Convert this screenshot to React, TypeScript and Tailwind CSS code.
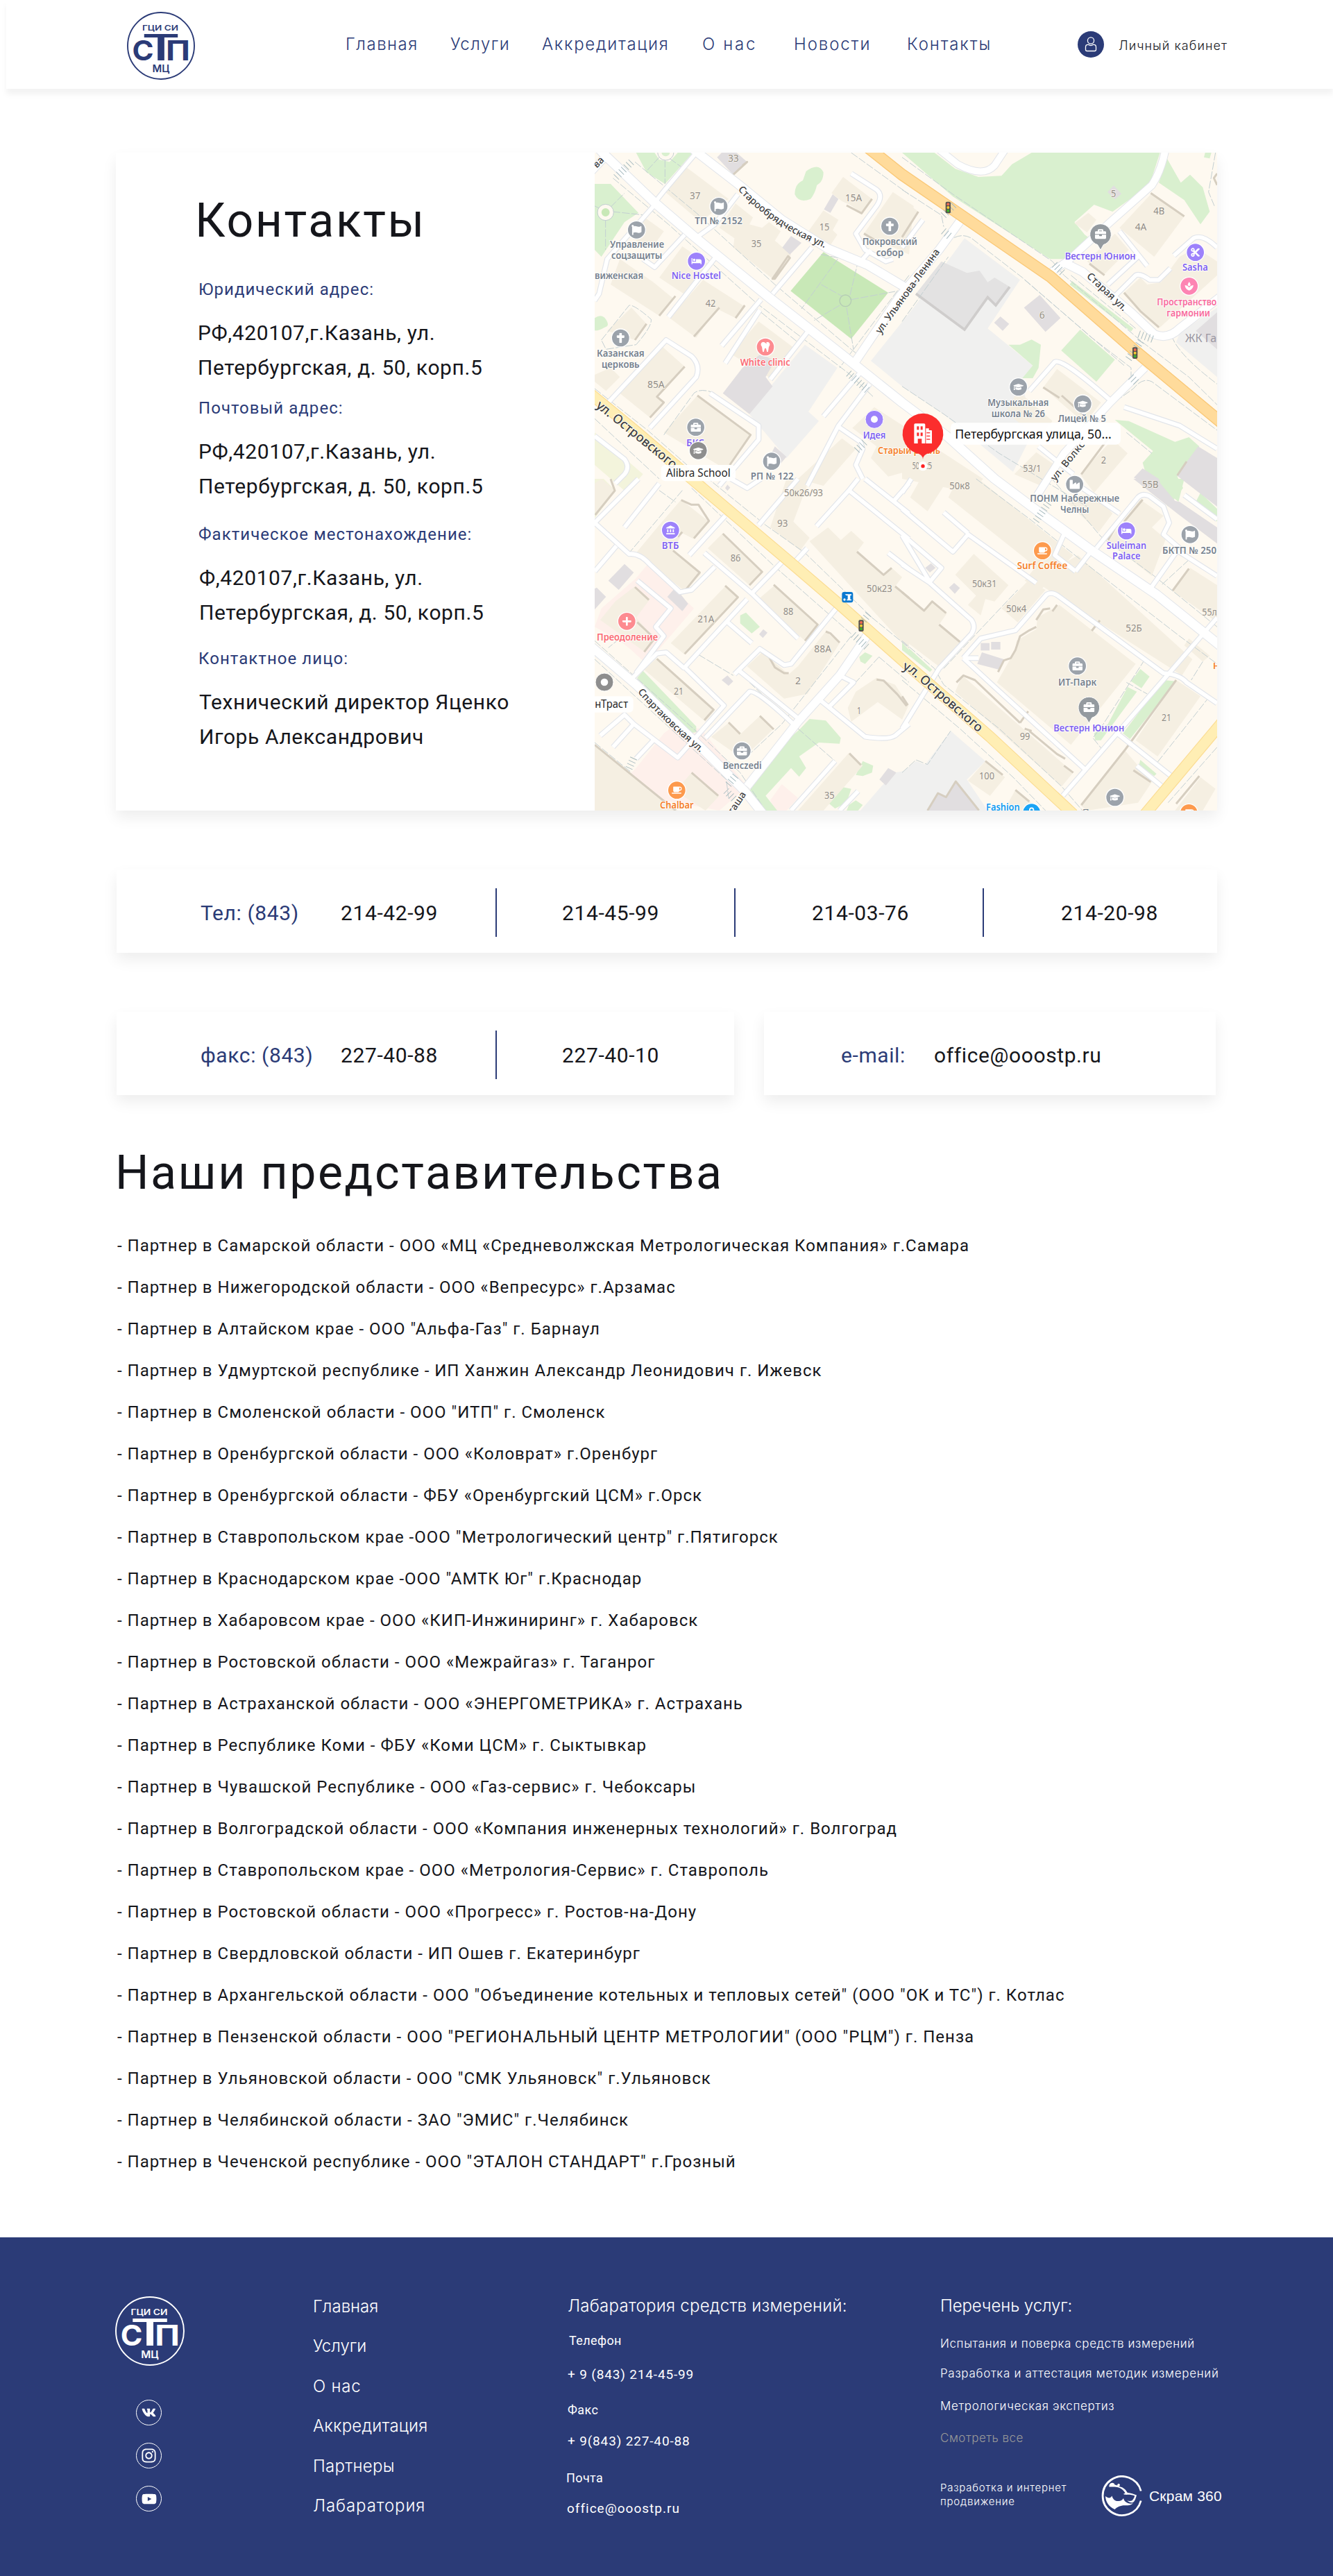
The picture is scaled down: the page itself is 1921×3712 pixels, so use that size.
import React from "react";
import {
  FaBed,
  FaBriefcase,
  FaCoffee,
  FaCross,
  FaCut,
  FaFlag,
  FaGraduationCap,
  FaIndustry,
  FaInstagram,
  FaPlus,
  FaShoppingBag,
  FaTooth,
  FaVk,
  FaYoutube,
} from "react-icons/fa";
import { MdAccountBalance, MdSpa } from "react-icons/md";

const INTER = "font-['Inter','Noto_Sans',sans-serif]";

/* ---------- brand ---------- */

function Logo({ size, color }: { size: number; color: string }) {
  return (
    <svg width={size} height={size} viewBox="0 0 98 98" className="shrink-0" fontFamily="Inter, sans-serif" fill={color}>
      <circle cx="49" cy="49" r="48" fill="none" stroke={color} strokeWidth="1.9" />
      <text x="22" y="26.8" fontSize="11" fontWeight="600" textLength="52" lengthAdjust="spacingAndGlyphs">ГЦИ СИ</text>
      <text x="7.5" y="70" fontSize="40" fontWeight="700" textLength="31" lengthAdjust="spacingAndGlyphs">С</text>
      <text x="21" y="70" fontSize="52" fontWeight="500" textLength="56" lengthAdjust="spacingAndGlyphs">Т</text>
      <text x="56" y="70" fontSize="40" fontWeight="700" textLength="35" lengthAdjust="spacingAndGlyphs">П</text>
      <text x="36.5" y="87" fontSize="14" fontWeight="600" textLength="25" lengthAdjust="spacingAndGlyphs">МЦ</text>
    </svg>
  );
}

function BearLogo() {
  return (
    <svg width="60" height="60" viewBox="0 0 60 60" className="shrink-0" fill="none">
      <path d="M58.2 22.5A28 28 0 1 0 58.2 36.5" stroke="#fff" strokeWidth="2.8" />
      <path d="M12.500 16.500c-.6-3 1.500-5.800 4.300-5.800 2.200 0 3.700 1.400 4 3.400 1.500-.7 2.600-.3 3.200.8.300-2.400 1.600-3.400 3.200-2.400 1.500 1 .6 2.600-.7 3.400 5.400.8 9.600 3.900 12.300 9 4.400.4 9.700 1.900 13.200 3.600-1.200 4.700-2.400 8.300-5.200 10.600-3.200.4-5.900-.6-8.600-2.500 3 .4 5.500.6 7.400-.4 1.600-1.900 2.900-4.200 3.700-6.800-3.500-1.500-8.500-2-12.600-1.500-2.400-6.400-7.300-9.900-12.700-10.900-4-.7-8-.4-11.500-.5z" fill="#fff" />
      <path d="M7 30c4 3 7 3.500 9.500-.5 1.200 5.200 4.500 7.800 9.500 7.600 3.200-.1 5.300-1.600 7-4.100.6 3.200 3 5.700 6.500 7 2.500.9 5 .8 7.500 0-3 3-7.500 3.500-12 3.300C29 43.200 24 45.500 20.500 49 12.500 45.500 7.500 39 7 30z" fill="#fff" />
      <path d="M33 27c1.500-1.600 4-2 6-.9-1.600 1.900-4.200 2.200-6 .9z" fill="#fff" />
    </svg>
  );
}

/* ---------- map ---------- */

type Tile = {
  dx: number;
  dy: number;
  pale?: string[];
  green?: string[];
  gray?: string[];
  pink?: string[];
  block?: string[];
  house?: string[];
  shade?: string[];
  lane?: string[];
  walk?: string[];
};

const tiles: Tile[] = [
  {
    dx: 0,
    dy: 0,
    pale: ["21,1240 230,1420 160,1500 21,1380"],
    green: [
      "200,30 280,30 300,60 345,70 380,30 445,30 410,70 325,165 245,115",
      "21,165 90,165 210,290 150,330 50,480 21,450",
    ],
    gray: ["930,860 1070,960 945,1150 990,1190 850,1350 690,1160 790,1030"],
    block: ["550,50 600,0 680,70 620,125", "660,960 740,900 800,930 760,1000 790,1040 690,1160 575,1070", "870,390 915,420 865,470 832,440", "1050,210 1075,230 1040,290 1012,275", "800,1300 850,1345 820,1380 780,1340"],
    house: [
      "400,80 600,230 480,330 320,195",
      "630,250 705,310 690,340 745,355 775,330 825,370 800,410 870,470 790,575 620,440 625,400 560,355",
      "1095,135 1220,230 1175,292 1125,255 1090,240 1045,205",
      "1010,280 1075,320 1050,365 1070,385 1040,430 945,370",
      "1310,200 1400,260 1380,470 1185,380",
      "230,305 320,370 270,440 180,400",
      "400,435 510,510 405,640 300,570",
      "130,490 275,590 360,660 300,735 90,600",
      "490,580 670,695 630,745 550,705 460,830 345,745",
      "180,700 245,770 195,840 75,800",
      "730,760 890,880 790,1010 610,900",
      "315,870 410,955 290,1080 320,1110 260,1175 130,1070",
      "465,1080 695,1250 590,1400 320,1240",
      "90,960 130,1000 70,1060 21,1020 21,990",
      "1230,1130 1400,1240 1400,1400 1290,1430 1215,1350 1240,1300 1135,1220",
      "1090,1265 1150,1310 1010,1470 900,1440",
    ],
    shade: ["M790,575l10,0 65,-90-8-8z", "M300,735l70-85M450,825l110-125M630,745l40-55M195,840l50-70", "M410,955l-120,130 30,25-60,65", "M465,1080l230,170-90,130", "M1110,258l65,34 45-62", "M660,85l20-15-60,55", "M1185,380l60,35"],
    lane: [
      "M285,240L325,190 460,30",
      "M470,390L540,340 640,210",
      "M285,250L75,490 40,640 20,670",
      "M410,385L280,525 230,490",
      "M545,480L340,740",
      "M960,440L790,640",
      "M740,665L570,865",
      "M735,710L585,940",
      "M80,1110L330,840 440,910Q480,950 460,1000L260,1220",
      "M520,1070L730,1210 730,1270 560,1470",
      "M945,800L780,1010",
      "M1130,120L1240,190Q1270,215 1240,260L1150,380 1190,450 1280,500 1310,490",
      "M1180,490L1215,450",
      "M1010,1170L1170,980",
      "M1210,1030L1075,1210 940,1470",
      "M1075,1215L1170,1280 1180,1310 1150,1380 1180,1440",
      "M21,1255L150,1355Q175,1390 150,1420L110,1460",
    ],
    walk: [
      "M100,140L340,340 720,680 1120,985 1225,1085",
      "M195,70L460,290 800,600 1130,880 1180,920",
      "M740,720L900,850",
      "M1130,30L1380,210",
      "M1000,470L1075,485 915,705M1000,600L1090,650M1125,645L1155,520M1130,665L1320,630M1110,700L1140,880M1080,690L970,755",
      "M21,1050L250,1230 420,1380",
      "M21,1180L300,1440",
      "M325,60V165M300,50L245,110M345,55L400,95",
      "M68,320V450M98,285L240,300M90,265L150,205M40,270L20,260",
      "M320,1250L450,1070Q480,1045 540,1070",
      "M1380,560L1080,960",
      "M50,840L170,690Q190,685 265,750 270,780 200,860L70,880z",
    ],
  },
  {
    dx: 1350,
    dy: 0,
    green: [
      "0,30 140,30 230,100 330,135 430,130 475,80 560,30 1115,30 1070,170 910,285 830,255 745,330 790,385 810,400 700,490 640,490 220,220",
      "1145,55 1205,160 1245,125 1300,180 1330,285 1290,340 1220,235 1110,160",
      "735,585 1000,790 990,803 725,600",
      "770,795 920,925 840,1020 688,885",
      "460,860 510,860 560,838 600,860 590,960 565,1005 520,1005 565,950",
      "920,1185 980,1190 1180,1280 1240,1260 1285,1300 1190,1430 1215,1480 1150,1560 1060,1440 1040,1370 1085,1320",
      "1310,30 1337,30 1330,55 1305,50",
    ],
    gray: [
      "270,400 510,580 370,790 565,950 520,1010 560,1250 480,1410 180,1160 0,1040 -135,930 50,700",
      "1200,810 1362,700 1362,1000 1185,850",
    ],
    block: [
      "595,645 685,745 620,805 527,700",
      "425,738 463,770 435,800 398,765",
      "915,172 948,208 920,232 888,200",
      "1280,1300 1362,1350 1362,1560 1187,1425",
      "1040,1395 1110,1440 1130,1500 1002,1435",
      "1362,720 1362,880 1270,800",
    ],
    house: [
      "0,230 70,285 0,400",
      "805,290 840,320 800,375 745,335",
      "1080,205 1220,305 1090,480 940,355",
      "920,380 980,450 870,560 800,500",
      "1200,480 1270,440 1362,500 1362,560 1110,790 955,640 1030,570 1060,600 1120,590 1170,520",
      "670,965 860,1110 790,1200 610,1045",
      "500,1060 650,1190 590,1270 450,1150",
      "580,1325 660,1380 600,1470 485,1420",
      "910,1270 975,1330 830,1500 770,1420",
      "0,1290 120,1290 350,1440 300,1500 0,1440",
    ],
    shade: ["M70,285L0,395", "M810,510l65,50M960,635l70,80 80,70", "M1075,205l145,100M1362,120l-14,20 14,30", "M610,1045l70,45M690,1080l90,80", "M775,1420l120-160", "M1190,1425l40-60"],
    lane: [
      "M90,320L0,440",
      "M1175,475L1260,400Q1300,380 1362,440",
      "M920,650L1010,560Q1030,550 1070,580L1110,580 1160,530",
      "M890,600L1020,480",
      "M550,1060L660,935Q690,915 900,1100",
      "M960,1130L1200,1210 1362,1310",
      "M590,1300L740,1420",
      "M940,370L1060,520",
    ],
    walk: [
      "M0,50L220,210 650,500 700,560 1040,850 1240,1000 1362,1120",
      "M0,190L170,300 180,350M190,420Q250,370 300,400L520,570 820,830 990,960 990,1010",
      "M730,560L1010,790",
      "M0,1040L180,1160 420,1330 800,1560",
      "M0,760L200,480",
      "M790,1200L1000,1050Q1040,1000 1080,1020L1362,1230",
      "M1355,30L1325,200 1350,260",
      "M1165,820Q1190,900 1362,1030",
      "M970,1240L1080,1330",
      "M530,580L740,760 960,950",
    ],
  },
  {
    dx: 0,
    dy: 1440,
    pale: ["21,0 60,0 110,50 21,170"],
    green: [
      "230,830 460,1070 460,1095 430,1100 205,860",
      "650,590 675,578 735,640 700,668 650,625",
      "910,1080 950,1038 1020,1045 1085,1120 1080,1145 990,1140 905,1200 935,1250 905,1288 870,1250 760,1370 810,1434 740,1434 690,1350 800,1180",
      "1165,770 1190,750 1222,765 1190,800 1170,790",
      "1150,1280 1180,1220 1225,1240 1220,1270 1180,1285",
      "1080,1330 1130,1340 1110,1400 1060,1425 1030,1400",
      "1120,1410 1150,1390 1180,1410 1160,1434 1110,1434",
      "1350,710 1380,730 1380,750 1355,730",
    ],
    gray: ["1320,1270 1380,1260 1380,1434 1170,1434 1260,1330"],
    pink: [
      "250,370 450,560 245,800 180,740 130,700 21,640 50,560 200,430",
      "360,1070 480,1080 680,1330 560,1434 100,1350 200,1250 320,1100",
      "830,1320 900,1380 850,1434 800,1434 780,1390",
    ],
    block: ["150,368 190,405 125,480 80,440", "30,470 70,510 21,565 21,475", "370,470 425,540 400,572 335,510", "595,850 620,875 600,895 570,870", "750,650 768,665 748,688 732,672", "595,25 607,38 595,52 585,40", "1290,1250 1325,1270 1280,1325 1252,1300"],
    house: [
      "21,20 50,0 110,50 30,150 21,140",
      "395,90 515,185 450,260 400,235 360,310 480,410 410,485 200,320 300,200",
      "575,235 745,405 690,460 510,300",
      "590,460 645,510 410,760 350,710",
      "800,460 985,630 930,700 730,520",
      "195,465 260,520 200,600 280,690 240,750 45,610 110,530",
      "290,775 540,1000 500,1050 235,825",
      "745,750 860,845 900,810 1020,660 1080,710 940,930 840,950 680,810",
      "600,1055 650,1105 735,1025 795,1080 660,1210 525,1115",
      "850,0 950,0 880,185 950,255 910,310 780,210",
      "950,270 1030,210 1085,265 1130,225 1185,275 1155,315 1270,415 1305,385 1350,425 1320,465 1380,520 1380,740",
      "1240,860 1320,890 1378,980 1350,1040 1245,965 1130,1050 1115,990 1150,920",
      "21,1150 380,1434 21,1434",
      "440,1270 560,1370 500,1434 370,1350",
      "1120,1185 1180,1240 1010,1434 900,1434",
    ],
    shade: [
      "M395,92l45,20 30,0 45,70-65,75M360,310l115,95-65,80M400,230l-20,20",
      "M575,237l170,165-55,58M585,462l55,50-230,245M795,458l190,172-55,70",
      "M290,778l245,220-40,45M745,750l30,20 25,45 40,25 20,0",
      "M600,1053l50,50M735,1025l60,58M21,1150l350,284M440,1270l115,100M1122,1187l50,50",
      "M90,1l18,50-85,105M1240,868l30,4 60,60 40,50M1020,660l20,8 40,40",
      "M195,468l60,55M205,620l75,70-45,58M1155,315l115,100 35-30M1320,465l60,50",
    ],
    lane: [
      "M21,190L210,0",
      "M150,210L300,20",
      "M21,190L170,325Q215,320 260,370L390,490 440,480 540,380",
      "M115,290L21,400",
      "M495,320L700,495",
      "M585,160L430,330",
      "M840,350L700,495 900,690",
      "M680,520L410,815",
      "M410,815L580,980 420,1160 380,1205 190,1060 150,1020 45,1110",
      "M185,860L290,755 330,750 410,820",
      "M205,440L350,560 285,640 320,680 200,840",
      "M590,615L700,710",
      "M625,845L735,735 840,805 870,800 1065,560",
      "M640,825L900,1035",
      "M500,1120L690,920Q720,910 880,1060",
      "M275,1130L200,1210M190,1060L100,1160",
      "M940,300L885,360",
      "M730,200L900,0",
      "M1000,960L1190,1115Q1290,1130 1320,1110L1380,1060",
      "M1035,985L1140,880 1080,850",
      "M980,205L1120,50 1380,260M1120,50L1160,0",
      "M1190,0L1380,150M1310,100L1380,20",
      "M610,0L680,40 740,0",
      "M1060,1220L870,1434M1160,1350L1080,1434",
      "M1290,320L1380,390",
    ],
    walk: [
      "M300,50L370,100M400,50L170,320",
      "M440,40L800,380 1130,670",
      "M500,-10L760,200 930,320 1220,600 1380,730",
      "M21,700L470,1100 650,1270 760,1434",
      "M21,780L590,1300 600,1380",
      "M130,690L80,730M470,760L620,850",
      "M1130,680L830,1060 680,1200",
      "M900,1080L1060,1220",
      "M1250,770L1140,890M1250,770L1380,880",
      "M690,880L850,1030",
      "M21,1140L180,1270",
    ],
  },
  {
    dx: 1350,
    dy: 1440,
    green: [
      "1095,0 1220,0 1195,100 1150,60",
      "1290,60 1362,130 1362,185 1270,100",
      "0,705 130,825 120,835 0,740",
      "1030,822 1070,855 1035,905 990,875",
      "975,900 1015,920 860,1130 835,1130 830,1100 890,1060",
      "1130,870 1185,875 985,1125 955,1100",
      "1030,1215 1100,1275 1090,1285 1025,1235",
    ],
    gray: ["210,1090 360,1220 280,1300 370,1434 0,1434 0,1270 60,1220 100,1235"],
    block: [
      "1000,0 1100,0 1180,95 1200,100 1362,210 1362,280 1190,150",
      "1225,0 1362,0 1362,110",
      "125,365 145,385 120,405 100,385",
      "225,450 250,472 228,497 203,470",
      "345,750 440,780 420,825 325,800",
      "340,710 378,710 378,742 340,742",
      "385,705 425,705 425,738 385,738",
      "110,1434 155,1355 190,1375 230,1305 335,1434",
    ],
    house: [
      "80,0 200,0 110,140 35,80",
      "240,0 330,0 740,330 600,480 530,440 570,390 540,350 200,80",
      "310,325 460,460 400,530 360,520 340,590 285,545 320,505 230,415",
      "545,440 620,480 500,620 430,560",
      "650,395 760,330 1255,780 1210,850 600,460",
      "680,545 1010,800 730,1150 410,880 490,740 495,700 580,650 585,600",
      "700,90 830,60 910,150 850,230",
      "1030,90 1130,160 1080,210 1140,260 1080,420 890,270",
      "1245,385 1362,460 1362,620 1170,485",
      "1240,690 1330,765 1300,790 1220,720",
      "0,490 95,570 130,530 195,580 160,630 255,705 165,815 0,690",
      "260,850 740,1270 690,1330 230,920",
      "1185,870 1290,940 1105,1200 1010,1130",
      "960,1170 1080,1310 1020,1400 800,1434 770,1410",
      "360,1220 445,1290 380,1370 285,1305",
      "490,1345 560,1400 530,1434 440,1434",
      "0,935 25,980 0,1010",
      "1290,1290 1355,1340 1300,1434 1180,1434",
    ],
    shade: [
      "M1040,90l-80,95M920,215l-30,50M1240,388l-70,95",
      "M640,560l-30,5-30,45M580,640l-30,15-40,25-20,60-20,35-30,10-25,50",
      "M670,545l-20,28M855,612l-35,45M545,1005l-35,50M550,1090l120,100 35,20",
      "M235,880l30-30 50,20 195,185M530,1080l30,10M700,1240l40,30",
      "M1185,870l-220,300-190,240M1000,1260l75,50M0,490l95,80 35-40 60,50M160,630l90,75",
      "M110,1434l45-75 35,17 42-68 100,125M490,1345l60,50M0,940l25,38",
      "M1285,1285l-100,120M360,1220l75,60",
    ],
    lane: [
      "M0,130L220,315 285,240 580,450",
      "M0,245L120,445 M0,370L120,450 300,610Q320,640 300,670L160,820 0,1080",
      "M0,60L40,0",
      "M180,145L285,235",
      "M120,445L170,385 0,240",
      "M265,775L340,690 490,655 625,500Q650,485 680,510L1130,840Q1200,845 1230,880L1362,970",
      "M265,775L400,900 790,1255",
      "M265,775H330",
      "M695,1370L930,1100 1170,1290",
      "M930,1100L1362,600",
      "M840,300L1020,80Q1040,60 1070,75L1130,120 1155,190 1130,240 1200,300",
      "M780,40L940,150",
      "M750,400L820,310M750,400L660,330 700,240",
      "M1070,480L1190,310 1362,420",
      "M1220,70L1362,175",
      "M1015,1240L1130,1335",
    ],
    walk: [
      "M320,0L560,180 760,340 1200,680 1362,800",
      "M640,-10L860,250 1090,420 1362,640",
      "M0,700L140,820 180,890 420,1080 690,1330 780,1434",
      "M0,870L250,1080 480,1290 620,1434",
      "M180,820L330,660 500,480",
      "M1050,780L870,1060 825,1120 865,1170M970,880L1060,930",
      "M1330,940L1100,1230",
      "M1240,350L1120,460M1362,1160L1150,1400",
      "M1300,790L1250,870",
      "M0,1270L60,1215 110,1235 210,1090",
    ],
  },
];

const MAIN_ROADS: [string, number][] = [
  ["M0,-30L70,45 285,250 460,400 780,660 960,800 1150,950 1350,1110 1550,1260 1750,1440 1950,1590 2170,1750 2450,1940 2730,2165", 38],
  ["M440,10L640,165 830,320 1030,445 1200,515 1360,610", 36],
  ["M1605,320L1510,450 1340,650 1150,930", 34],
  ["M0,2160L200,2330 500,2620 670,2790 750,2890", 36],
  ["M1200,2115L1080,2290 900,2490 680,2770", 34],
  ["M2400,960L2250,1110 2050,1330 1935,1510", 30],
  ["M2050,505L2130,545 2340,720 2440,815Q2500,840 2550,790L2730,650", 34],
  ["M2490,10Q2470,110 2430,170L2250,330 2070,495 1975,560", 30],
  ["M1490,0L1590,80Q1700,140 1750,85L1800,10", 28],
  ["M65,50L-10,130", 30],
];

const OSTROVSKY = "M0,1070L200,1235 440,1440 860,1795 1070,1975 1380,2250 1730,2555 2090,2890";
const PETERSBURG = "M1180,-10L1350,125 1590,290 1990,565 2350,880 2740,1205";

const NUMBERS: [number, number, string, number][] = [
  [598, 68, "33", 46], [432, 231, "37", 46], [698, 437, "35", 44], [1104, 240, "15А", 72], [992, 367, "15", 44],
  [500, 695, "42", 44], [249, 1046, "85А", 74], [2253, 221, "5", 22], [2437, 297, "4В", 48], [2357, 367, "4А", 50],
  [1943, 748, "6", 24], [1873, 1410, "53/1", 78], [2210, 1373, "2", 22], [1555, 1486, "50к8", 88], [2388, 1480, "55В", 70],
  [840, 1514, "50к26/93", 168], [810, 1646, "93", 46], [608, 1796, "86", 44], [836, 2028, "88", 44], [466, 2061, "21А", 72],
  [970, 2190, "88А", 74], [888, 2327, "2", 24], [363, 2372, "21", 42], [1155, 2457, "1", 18], [1197, 1928, "50к23", 110],
  [1014, 2822, "35", 44], [1653, 1908, "50к31", 106], [1800, 2015, "50к4", 88], [2317, 2099, "52Б", 70], [2647, 2032, "55л", 64],
  [2472, 2487, "21", 42], [1859, 2569, "99", 44], [1683, 2739, "100", 66],
  [1394, 1398, "50", 30], [1444, 1398, "к5", 36],
];

type Poi = { x: number; y: number; w: number; text: string; color: string };
const GREY = "#76818d";
const VIOLET = "#7f62f0";
const POI_TEXT: Poi[] = [
  { x: 557, y: 339, w: 206, text: "ТП № 2152", color: GREY },
  { x: 204, y: 442, w: 234, text: "Управление", color: GREY },
  { x: 203, y: 489, w: 220, text: "соцзащиты", color: GREY },
  { x: 126, y: 577, w: 210, text: "виженская", color: GREY },
  { x: 460, y: 575, w: 214, text: "Nice Hostel", color: VIOLET },
  { x: 133, y: 913, w: 206, text: "Казанская", color: GREY },
  { x: 133, y: 961, w: 164, text: "церковь", color: GREY },
  { x: 758, y: 951, w: 216, text: "White clinic", color: "#fb6a72" },
  { x: 1297, y: 430, w: 238, text: "Покровский", color: GREY },
  { x: 1297, y: 477, w: 118, text: "собор", color: GREY },
  { x: 1230, y: 1266, w: 98, text: "Идея", color: VIOLET },
  { x: 1380, y: 1331, w: 270, text: "Старый рояль", color: "#f5812b" },
  { x: 456, y: 1298, w: 78, text: "БКС", color: VIOLET },
  { x: 788, y: 1443, w: 186, text: "РП № 122", color: GREY },
  { x: 2207, y: 491, w: 306, text: "Вестерн Юнион", color: VIOLET },
  { x: 2617, y: 541, w: 110, text: "Sasha", color: VIOLET },
  { x: 2581, y: 690, w: 258, text: "Пространство", color: "#f86a9c" },
  { x: 2588, y: 737, w: 188, text: "гармонии", color: "#f86a9c" },
  { x: 1852, y: 1125, w: 264, text: "Музыкальная", color: GREY },
  { x: 1852, y: 1172, w: 232, text: "школа № 26", color: GREY },
  { x: 2128, y: 1195, w: 208, text: "Лицей № 5", color: GREY },
  { x: 2096, y: 1539, w: 386, text: "ПОНМ Набережные", color: GREY },
  { x: 2096, y: 1586, w: 124, text: "Челны", color: GREY },
  { x: 1956, y: 1829, w: 218, text: "Surf Coffee", color: "#f5812b" },
  { x: 2320, y: 1743, w: 172, text: "Suleiman", color: VIOLET },
  { x: 2320, y: 1789, w: 122, text: "Palace", color: VIOLET },
  { x: 2592, y: 1763, w: 234, text: "БКТП № 250", color: GREY },
  { x: 348, y: 1742, w: 74, text: "ВТБ", color: VIOLET },
  { x: 162, y: 2139, w: 264, text: "Преодоление", color: "#fb6a72" },
  { x: 2108, y: 2334, w: 166, text: "ИТ-Парк", color: GREY },
  { x: 2158, y: 2533, w: 306, text: "Вестерн Юнион", color: VIOLET },
  { x: 659, y: 2694, w: 168, text: "Benczedi", color: GREY },
  { x: 376, y: 2864, w: 146, text: "Chalbar", color: "#f5812b" },
  { x: 1786, y: 2873, w: 146, text: "Fashion", color: "#109cf1" },
];

type Marker = { x: number; y: number; fill: string; Icon: React.ElementType };
const MARKERS: Marker[] = [
  { x: 558, y: 262, fill: "#9ca3ab", Icon: FaFlag },
  { x: 202, y: 364, fill: "#9ca3ab", Icon: FaFlag },
  { x: 461, y: 499, fill: "#9d82fb", Icon: FaBed },
  { x: 133, y: 831, fill: "#9ca3ab", Icon: FaCross },
  { x: 759, y: 870, fill: "#fd8b90", Icon: FaTooth },
  { x: 1297, y: 348, fill: "#9ca3ab", Icon: FaCross },
  { x: 458, y: 1217, fill: "#9ca3ab", Icon: FaBriefcase },
  { x: 469, y: 1318, fill: "#8e8e8e", Icon: FaGraduationCap },
  { x: 786, y: 1364, fill: "#9ca3ab", Icon: FaFlag },
  { x: 2618, y: 461, fill: "#9d82fb", Icon: FaCut },
  { x: 2591, y: 607, fill: "#fd85b3", Icon: MdSpa },
  { x: 1853, y: 1043, fill: "#9ca3ab", Icon: FaGraduationCap },
  { x: 2131, y: 1116, fill: "#9ca3ab", Icon: FaGraduationCap },
  { x: 2096, y: 1464, fill: "#9ca3ab", Icon: FaIndustry },
  { x: 1957, y: 1751, fill: "#fd9a4d", Icon: FaCoffee },
  { x: 2320, y: 1665, fill: "#9d82fb", Icon: FaBed },
  { x: 2595, y: 1681, fill: "#9ca3ab", Icon: FaFlag },
  { x: 349, y: 1662, fill: "#9d82fb", Icon: MdAccountBalance },
  { x: 160, y: 2056, fill: "#fd8b90", Icon: FaPlus },
  { x: 2108, y: 2249, fill: "#9ca3ab", Icon: FaBriefcase },
  { x: 658, y: 2616, fill: "#9ca3ab", Icon: FaBriefcase },
  { x: 376, y: 2786, fill: "#fd9a4d", Icon: FaCoffee },
  { x: 2270, y: 2817, fill: "#9ca3ab", Icon: FaGraduationCap },
  { x: 1910, y: 2882, fill: "#1aa4f5", Icon: FaShoppingBag },
  { x: 2590, y: 2884, fill: "#fd9a4d", Icon: FaCoffee },
];

function Layer({ render }: { render: (t: Tile) => React.ReactNode }) {
  return (
    <>
      {tiles.map((t, i) => (
        <g key={i} transform={`translate(${t.dx} ${t.dy})`}>{render(t)}</g>
      ))}
    </>
  );
}

const polys = (list: string[] | undefined, fill: string) =>
  (list ?? []).map((p, i) => <polygon key={i} points={p} fill={fill} />);

const strokes = (list: string[] | undefined, stroke: string, width: number, dash?: string) =>
  (list ?? []).map((d, i) => (
    <path key={i} d={d} fill="none" stroke={stroke} strokeWidth={width} strokeDasharray={dash} strokeLinejoin="round" />
  ));

function TrafficLight({ x, y }: { x: number; y: number }) {
  return (
    <g transform={`translate(${x} ${y})`}>
      <rect x="-11" y="-25" width="22" height="50" rx="6" fill="#55524e" />
      <circle cy="-14" r="6" fill="#f26a50" />
      <circle r="6" fill="#f5cb32" />
      <circle cy="14" r="6" fill="#3faf2c" />
    </g>
  );
}

function Crosswalk({ x, y, a, n = 7 }: { x: number; y: number; a: number; n?: number }) {
  return (
    <g transform={`translate(${x} ${y}) rotate(${a})`} stroke="#a9bcc0" strokeWidth="3">
      {Array.from({ length: n }, (_, i) => (
        <path key={i} d={`M${i * 15},-16V16`} />
      ))}
    </g>
  );
}

function WorkPin({ x, y }: { x: number; y: number }) {
  return (
    <g transform={`translate(${x} ${y})`}>
      <path d="M0,68L-13,45A46,46 0 1 1 13,45z" fill="#949a9f" stroke="#fff" strokeWidth="3" />
      <FaBriefcase x={-24} y={-25} size={48} color="#fff" />
    </g>
  );
}

function CityMap() {
  return (
    <svg width="897" height="948" viewBox="21 30 2691 2844" className="block shrink-0" fontFamily="'Noto Sans', sans-serif">
      <rect x="0" y="0" width="2740" height="2900" fill="#fef9f0" />
      <Layer render={(t) => polys(t.pale, "#f3f4dc")} />
      <Layer render={(t) => polys(t.gray, "#f0f0ef")} />
      <Layer render={(t) => polys(t.pink, "#fef0eb")} />
      <Layer render={(t) => polys(t.green, "#d9f0cf")} />
      <polygon points="1010,460 1290,635 1130,835 868,628" fill="#c8e8b7" />
      <path d="M935,110q55-40 75,5 0,40-28,55-10,40-28,60-50,20-68-20 0-45 35-60z" fill="#d9f0cf" />
      <path d="M21,745q30-20 48,5 20,30-5,35-25,15-43,14z" fill="#d9f0cf" />
      <polygon points="1520,500 1630,550 1685,540 1720,590 1750,570 1815,610 1755,690 1720,655 1620,800 1410,640" fill="#e3e2e2" />
      <path d="M1410,640L1620,795 1720,655 1755,690 1815,610" fill="none" stroke="#cfcdcc" strokeWidth="11" />
      <Layer render={(t) => polys(t.house, "#f5efe2")} />
      <Layer render={(t) => polys(t.block, "#e1dee0")} />
      <Layer render={(t) => strokes(t.shade, "#d6cec0", 9)} />
      <Layer render={(t) => strokes(t.walk, "#c3cfd2", 3, "34 7")} />
      <Layer render={(t) => strokes(t.lane, "#e2e5ea", 24)} />
      {MAIN_ROADS.map(([d, w]) => (
        <path key={d} d={d} fill="none" stroke="#e2e5ea" strokeWidth={w + 6} strokeLinejoin="round" />
      ))}
      <Layer render={(t) => strokes(t.lane, "#fff", 17)} />
      {MAIN_ROADS.map(([d, w]) => (
        <path key={d} d={d} fill="none" stroke="#fff" strokeWidth={w} strokeLinejoin="round" />
      ))}
      <circle cx="68" cy="288" r="26" fill="#d9f0cf" stroke="#fef9f0" strokeWidth="16" />
      <circle cx="68" cy="288" r="35" fill="none" stroke="#c3cfd2" strokeWidth="3" />
      <circle cx="68" cy="288" r="17" fill="#c8e8b7" />
      <circle cx="328" cy="28" r="26" fill="#d9f0cf" stroke="#fef9f0" strokeWidth="16" />
      <circle cx="328" cy="28" r="35" fill="none" stroke="#c3cfd2" strokeWidth="3" />
      <circle cx="1105" cy="670" r="25" fill="none" stroke="#b5ccb5" strokeWidth="4" />
      {[OSTROVSKY, "M2740,2485L2400,2890"].map((d) => (
        <g key={d} fill="none">
          <path d={d} stroke="#fbdc92" strokeWidth="50" />
          <path d={d} stroke="#ffeeb4" strokeWidth="43" />
        </g>
      ))}
      <path d={PETERSBURG} fill="none" stroke="#fac877" strokeWidth="52" />
      <path d={PETERSBURG} fill="none" stroke="#ffdb9b" strokeWidth="44" />

      <Crosswalk x={115} y={135} a={-45} />
      <Crosswalk x={1120} y={985} a={42} n={8} />
      <Crosswalk x={1155} y={1315} a={-45} n={4} />
      <Crosswalk x={1530} y={300} a={-45} n={5} />
      <Crosswalk x={1530} y={370} a={40} n={3} />
      <Crosswalk x={2010} y={515} a={45} n={4} />
      <Crosswalk x={2375} y={815} a={20} n={5} />
      <Crosswalk x={2330} y={920} a={-55} n={7} />
      <Crosswalk x={2340} y={1000} a={45} n={3} />
      <Crosswalk x={1930} y={1620} a={-55} n={7} />
      <Crosswalk x={1140} y={2115} a={42} n={6} />
      <Crosswalk x={1185} y={2050} a={-50} n={3} />
      <Crosswalk x={170} y={2690} a={-65} n={4} />
      <Crosswalk x={600} y={2760} a={-50} n={4} />
      <Crosswalk x={590} y={2790} a={45} n={4} />
      <TrafficLight x={1549} y={267} />
      <TrafficLight x={2357} y={896} />
      <TrafficLight x={1173} y={2075} />
      <rect x="1090" y="1929" width="48" height="46" rx="9" fill="#0b79d0" />
      <path d="M1103,1939h28v5h-5v17h5v5h-20v-5h4v-17h-7z" fill="#fff" />
      <circle cx="1101" cy="1962" r="5" fill="#fff" />

      <g fontSize="41" fill="#908c86" stroke="#fbf6ec" strokeWidth="4" paintOrder="stroke">
        {NUMBERS.map(([x, y, s, w]) => (
          <text key={`${x}-${y}`} x={x} y={y} textLength={w} lengthAdjust="spacingAndGlyphs">{s}</text>
        ))}
      </g>
      <text x="2574" y="850" fontSize="48" fill="#9a97a2" textLength="136" lengthAdjust="spacingAndGlyphs">ЖК Га</text>

      <g fill="none">
        <path id="st-old" d="M640,190Q780,350 1040,452" />
        <path id="st-ostr1" d="M24,1128L330,1375 440,1470" />
        <path id="st-ostr2" d="M1350,2262L1380,2275 1700,2555 1760,2610" />
        <path id="st-spart" d="M206,2362Q330,2505 510,2650" />
      </g>
      <g fill="#424242" stroke="#fff" strokeWidth="5" paintOrder="stroke" fontWeight="500">
        <text fontSize="42"><textPath href="#st-old">Старообрядческая ул.</textPath></text>
        <text fontSize="55"><textPath href="#st-ostr1">ул. Островского</textPath></text>
        <text fontSize="55"><textPath href="#st-ostr2">ул. Островского</textPath></text>
        <text fontSize="42"><textPath href="#st-spart">Спартаковская ул.</textPath></text>
        <text fontSize="43" textLength="440" transform="translate(1256 815) rotate(-54)">ул. Ульянова-Ленина</text>
        <text fontSize="43" textLength="220" transform="translate(2146 567) rotate(43)">Старая ул.</text>
        <text fontSize="43" textLength="205" transform="translate(2012 1452) rotate(-51)">ул. Волкс</text>
        <text fontSize="42" transform="translate(618 2892) rotate(-56)">таша</text>
        <text fontSize="42" transform="translate(30 98) rotate(-45)">ва</text>
      </g>

      <g fontSize="41" fontWeight="600" textAnchor="middle" stroke="#fff" strokeWidth="5" paintOrder="stroke">
        {POI_TEXT.map((p) => (
          <text key={`${p.x}-${p.y}`} x={p.x} y={p.y} fill={p.color} textLength={p.w} lengthAdjust="spacingAndGlyphs">{p.text}</text>
        ))}
      </g>
      {MARKERS.map(({ x, y, fill, Icon }) => (
        <g key={`${x}-${y}`}>
          <circle cx={x} cy={y} r="39" fill={fill} stroke="#fff" strokeWidth="4" />
          <Icon x={x - 22} y={y - 22} size={44} color="#fff" />
        </g>
      ))}
      <circle cx="1230" cy="1183" r="39" fill="#9d82fb" stroke="#fff" strokeWidth="3" />
      <circle cx="1230" cy="1183" r="15" fill="#fff" />
      <circle cx="63" cy="2319" r="39" fill="#8e8e8e" stroke="#fff" strokeWidth="3" />
      <circle cx="63" cy="2319" r="16" fill="#fff" />
      <WorkPin x={2208} y={383} />
      <WorkPin x={2158} y={2428} />

      <rect x="308" y="1380" width="322" height="70" rx="18" fill="#fff" fillOpacity=".9" />
      <text x="330" y="1430" fontSize="46" fill="#262626" textLength="278" lengthAdjust="spacingAndGlyphs">Alibra School</text>
      <rect x="-20" y="2380" width="208" height="70" rx="18" fill="#fff" fillOpacity=".9" />
      <text x="22" y="2430" fontSize="46" fill="#262626" textLength="143" lengthAdjust="spacingAndGlyphs">нТраст</text>
      <text x="2130" y="2894" fontSize="39" fill={GREY}>Пространство</text>
      <text x="2694" y="2262" fontSize="39" fontWeight="600" fill="#f5812b">Н</text>

      <rect x="1560" y="1198" width="735" height="94" rx="20" fill="#fff" fillOpacity=".93" />
      <text x="1579" y="1265" fontSize="54" fill="#111" textLength="676" lengthAdjust="spacingAndGlyphs">Петербургская улица, 50...</text>
      <circle cx="1440" cy="1385" r="20" fill="#fff" />
      <circle cx="1440" cy="1385" r="8" fill="#f22" />
      <path d="M1440,1356Q1440,1334 1410,1328A88,88 0 1 1 1470,1328Q1440,1334 1440,1356z" fill="#fb2d2d" />
      <g transform="translate(1350 0)" fill="#fff">
        <path d="M52,1206q0-5 5-5h38q5 0 5 5v81h-15v-20h-17v20h-16z" />
        <path d="M103,1222h13v8h10q3 0 3 4v53h-26z" />
        <g fill="#fb2d2d">
          <rect x="64" y="1213" width="9" height="15" />
          <rect x="80" y="1213" width="9" height="15" />
          <rect x="64" y="1240" width="9" height="15" />
          <rect x="80" y="1240" width="9" height="15" />
          <rect x="106" y="1239" width="15" height="4" />
          <rect x="106" y="1253" width="15" height="4" />
          <rect x="106" y="1267" width="15" height="4" />
        </g>
      </g>
    </svg>
  );
}

/* ---------- page sections ---------- */

function Header() {
  return (
    <header className={`ml-[9px] flex h-32 items-start bg-white shadow-[0_8px_8px_rgba(0,0,0,0.05)] ${INTER}`}>
      <div className="ml-[174px] mt-[17px]">
        <Logo size={98} color="#2b3b77" />
      </div>
      <nav className="ml-[217px] mt-[48px] grid grid-cols-[151px_132px_231px_132px_163px_246px] whitespace-nowrap text-[24px] font-light leading-8 text-[#2b3b77]">
        <a className="tracking-[1.5px]">Главная</a>
        <a className="tracking-[1.5px]">Услуги</a>
        <a className="tracking-[1.7px]">Аккредитация</a>
        <a className="tracking-[2.7px]">О нас</a>
        <a className="tracking-[1.9px]">Новости</a>
        <a className="tracking-[1.9px]">Контакты</a>
      </nav>
      <a className="mt-[45px] flex items-start">
        <span className="flex size-[38px] items-center justify-center rounded-full bg-[#2b3b77]">
          <svg width="18" height="22" viewBox="0 0 18 22" fill="none" stroke="#fff" strokeWidth="1.300">
            <circle cx="9" cy="5.500" r="4.600" />
            <path d="M5.500 11.300H4.500Q1.500 11.300 1.500 15v3.500Q1.500 20.500 3.500 20.500h11q2 0 2-2V15q0-3.700-3-3.700h-1q-3.500 2.600-7 0z" />
          </svg>
        </span>
        <span className="ml-[21px] mt-[9px] whitespace-nowrap text-[18px] font-light leading-6 tracking-[1.06px] text-[#15161b]">Личный кабинет</span>
      </a>
    </header>
  );
}

const CARD = "bg-white shadow-[0_10px_20px_rgba(0,0,0,0.07)]";
const LABEL = "text-[24px] leading-8 tracking-[1.05px] text-[#2b3b77]";
const ADDRESS = "mt-[22px] text-[30px] leading-[50px] tracking-[0.6px] text-[#15161b]";

function ContactsCard() {
  return (
    <section className={`ml-[167px] mt-[92px] flex h-[948px] w-[1587px] ${CARD}`}>
      <div className="w-[690px] shrink-0 whitespace-nowrap pl-[114px] pt-[58px]">
        <h1 className="text-[68px] leading-[80px] tracking-[2.6px] text-[#15161b]">Контакты</h1>
        <div className="pl-[5px]">
          <h2 className={`mt-[43px] ${LABEL}`}>Юридический адрес:</h2>
          <p className={`-ml-px ${ADDRESS}`}>РФ,420107,г.Казань, ул.<br />Петербургская, д. 50, корп.5</p>
          <h2 className={`mt-[17px] ${LABEL}`}>Почтовый адрес:</h2>
          <p className={ADDRESS}>РФ,420107,г.Казань, ул.<br />Петербургская, д. 50, корп.5</p>
          <h2 className={`mt-[28px] ${LABEL}`}>Фактическое местонахождение:</h2>
          <p className={`ml-px ${ADDRESS}`}>Ф,420107,г.Казань, ул.<br />Петербургская, д. 50, корп.5</p>
          <h2 className={`mt-[25px] ${LABEL}`}>Контактное лицо:</h2>
          <p className={`ml-px ${ADDRESS}`}>Технический директор Яценко<br />Игорь Александрович</p>
        </div>
      </div>
      <CityMap />
    </section>
  );
}

const VALUE = "mt-[43px] shrink-0 whitespace-nowrap text-[30px] leading-10 tracking-[0.6px]";
const DIVIDER = "mt-[27px] h-[70px] w-[2px] shrink-0 bg-[#2b3b77]";

function Phones() {
  return (
    <>
      <section className={`ml-[168px] mt-[85px] flex h-[120px] w-[1586px] items-start pl-[121px] text-[#15161b] ${CARD}`}>
        <span className={`w-[202px] text-[#2b3b77] ${VALUE}`}>Тел: (843)</span>
        <span className={`w-[223px] ${VALUE}`}>214-42-99</span>
        <i className={DIVIDER} />
        <span className={`ml-[94px] w-[248px] ${VALUE}`}>214-45-99</span>
        <i className={DIVIDER} />
        <span className={`ml-[110px] w-[246px] ${VALUE}`}>214-03-76</span>
        <i className={DIVIDER} />
        <span className={`ml-[111px] ${VALUE}`}>214-20-98</span>
      </section>
      <div className="ml-[168px] mt-[85px] flex gap-[43px] text-[#15161b]">
        <section className={`flex h-[120px] w-[890px] items-start pl-[121px] ${CARD}`}>
          <span className={`w-[202px] text-[#2b3b77] ${VALUE}`}>факс: (843)</span>
          <span className={`w-[223px] ${VALUE}`}>227-40-88</span>
          <i className={DIVIDER} />
          <span className={`ml-[94px] ${VALUE}`}>227-40-10</span>
        </section>
        <section className={`flex h-[120px] w-[651px] items-start pl-[111px] ${CARD}`}>
          <span className={`w-[134px] text-[#2b3b77] ${VALUE}`}>e-mail:</span>
          <span className={VALUE}>office@ooostp.ru</span>
        </section>
      </div>
    </>
  );
}

const PARTNERS = [
  "- Партнер в Самарской области - ООО «МЦ «Средневолжская Метрологическая Компания» г.Самара",
  "- Партнер в Нижегородской области - ООО «Вепресурс» г.Арзамас",
  '- Партнер в Алтайском крае - ООО "Альфа-Газ" г. Барнаул',
  "- Партнер в Удмуртской республике - ИП Ханжин Александр Леонидович г. Ижевск",
  '- Партнер в Смоленской области - ООО "ИТП" г. Смоленск',
  "- Партнер в Оренбургской области - ООО «Коловрат» г.Оренбург",
  "- Партнер в Оренбургской области - ФБУ «Оренбургский ЦСМ» г.Орск",
  '- Партнер в Ставропольском крае -ООО "Метрологический центр" г.Пятигорск',
  '- Партнер в Краснодарском крае -ООО "АМТК Юг" г.Краснодар',
  "- Партнер в Хабаровсом крае - ООО «КИП-Инжиниринг» г. Хабаровск",
  "- Партнер в Ростовской области - ООО «Межрайгаз» г. Таганрог",
  "- Партнер в Астраханской области - ООО «ЭНЕРГОМЕТРИКА» г. Астрахань",
  "- Партнер в Республике Коми - ФБУ «Коми ЦСМ» г. Сыктывкар",
  "- Партнер в Чувашской Республике - ООО «Газ-сервис» г. Чебоксары",
  "- Партнер в Волгоградской области - ООО «Компания инженерных технологий» г. Волгоград",
  "- Партнер в Ставропольском крае - ООО «Метрология-Сервис» г. Ставрополь",
  "- Партнер в Ростовской области - ООО «Прогресс» г. Ростов-на-Дону",
  "- Партнер в Свердловской области - ИП Ошев г. Екатеринбург",
  '- Партнер в Архангельской области - ООО "Объединение котельных и тепловых сетей" (ООО "ОК и ТС") г. Котлас',
  '- Партнер в Пензенской области - ООО "РЕГИОНАЛЬНЫЙ ЦЕНТР МЕТРОЛОГИИ" (ООО "РЦМ") г. Пенза',
  '- Партнер в Ульяновской области - ООО "СМК Ульяновск" г.Ульяновск',
  '- Партнер в Челябинской области - ЗАО "ЭМИС" г.Челябинск',
  '- Партнер в Чеченской республике - ООО "ЭТАЛОН СТАНДАРТ" г.Грозный',
];

function Partners() {
  return (
    <section className="ml-[166px] mt-[72px] whitespace-nowrap text-[#15161b]">
      <h2 className="text-[68px] leading-[80px] tracking-[2.55px]">Наши представительства</h2>
      <ul className="ml-[3px] mt-[35px] text-[24px] leading-[60px] tracking-[1px]">
        {PARTNERS.map((p) => (
          <li key={p}>{p}</li>
        ))}
      </ul>
    </section>
  );
}

const SOCIAL = "flex size-[37px] items-center justify-center rounded-full border border-white";

function Footer() {
  return (
    <footer className={`mt-[79px] flex h-[488px] items-start whitespace-nowrap bg-[#2b3b77] text-white ${INTER}`}>
      <div className="w-[451px] shrink-0 pl-[166px] pt-[85px]">
        <Logo size={100} color="#fff" />
        <div className="ml-[30px] mt-[49px] flex flex-col gap-[25px]">
          <a className={SOCIAL}><FaVk size={21} /></a>
          <a className={SOCIAL}><FaInstagram size={23} /></a>
          <a className={SOCIAL}><FaYoutube size={22} /></a>
        </div>
      </div>
      <nav className="flex w-[367px] shrink-0 flex-col pt-[70.5px] text-[24px] font-light leading-[57.6px]">
        <a>Главная</a>
        <a>Услуги</a>
        <a className="tracking-[0.8px]">О нас</a>
        <a className="tracking-[0.2px]">Аккредитация</a>
        <a className="tracking-[0.3px]">Партнеры</a>
        <a className="tracking-[0.9px]">Лабаратория</a>
      </nav>
      <div className="w-[537px] shrink-0 pt-[83px] font-['Roboto',sans-serif] text-[19px] leading-6 tracking-[0.85px]">
        <h3 className={`text-[24px] font-light leading-8 tracking-[0.26px] ${INTER}`}>Лабаратория средств измерений:</h3>
        <p className="ml-0.5 mt-[22px] text-[18px] tracking-[0.4px]">Телефон</p>
        <p className="mt-[25px]">+ 9 (843) 214-45-99</p>
        <p className="mt-[27px] text-[18px] tracking-[0.4px]">Факс</p>
        <p className="mt-[21px]">+ 9(843) 227-40-88</p>
        <p className="-ml-0.5 mt-[29px] text-[18px] tracking-[0.4px]">Почта</p>
        <p className="-ml-px mt-5 tracking-[1px]">office@ooostp.ru</p>
      </div>
      <div className="pt-[83px] text-[17px] font-light leading-6 tracking-[0.65px]">
        <h3 className="text-[24px] leading-8 tracking-[-0.1px]">Перечень услуг:</h3>
        <p className="mt-[26px] tracking-[0.6px]">Испытания и поверка средств измерений</p>
        <p className="mt-[19px] tracking-[0.7px]">Разработка и аттестация методик измерений</p>
        <p className="mt-[23px]">Метрологическая экспертиз</p>
        <p className="mt-[22px] tracking-[0.5px] text-[#9a9a98]">Смотреть все</p>
        <div className="mt-[42px] flex items-start">
          <p className="mt-2 w-[231px] text-[15px] leading-5 tracking-[0.78px]">Разработка и интернет<br />продвижение</p>
          <BearLogo />
          <span className="ml-[10px] mt-[18px] font-['Liberation_Sans',sans-serif] text-[21px] font-normal leading-6 tracking-[0.2px]">Скрам 360</span>
        </div>
      </div>
    </footer>
  );
}

export default function App() {
  return (
    <div className="h-[3712px] w-[1921px] overflow-hidden bg-white font-['Roboto',sans-serif] font-normal">
      <Header />
      <ContactsCard />
      <Phones />
      <Partners />
      <Footer />
    </div>
  );
}
